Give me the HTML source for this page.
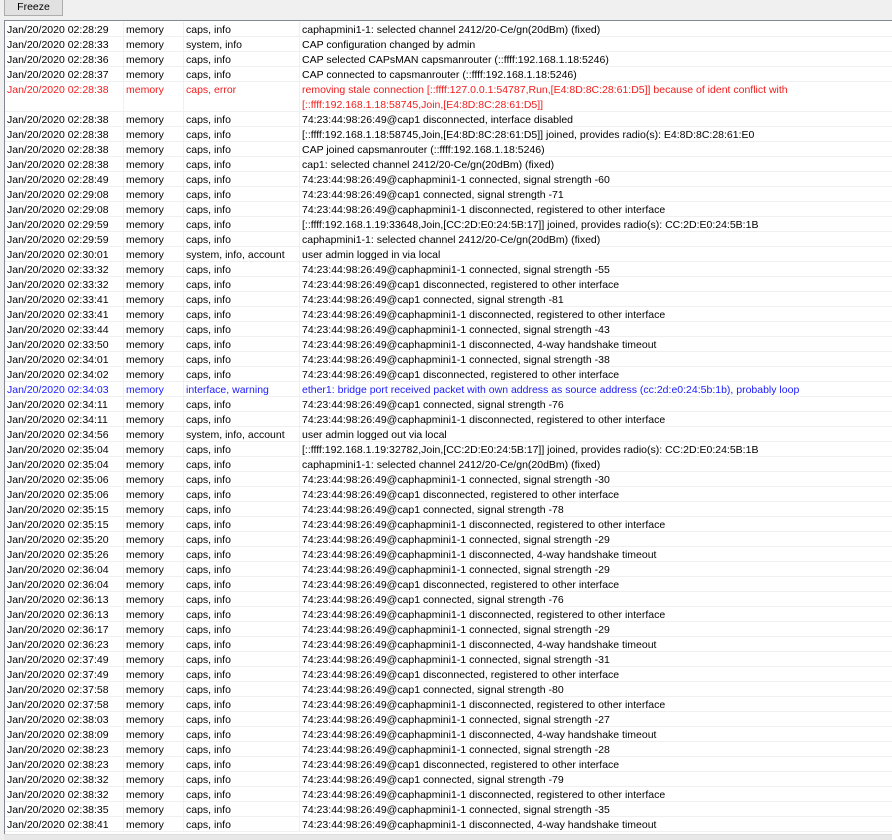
<!DOCTYPE html>
<html><head><meta charset="utf-8"><style>
*{margin:0;padding:0;box-sizing:border-box}
body{width:892px;height:840px;background:#f0f0f0;font-family:"Liberation Sans",Arial,sans-serif;font-size:10.5px;color:#000;overflow:hidden;position:relative}
.btn{position:absolute;left:4px;top:-2px;width:59px;height:18px;border:1px solid #adadad;background:#e1e1e1;text-align:center;line-height:17px;font-size:10.5px}
.tbl{position:absolute;left:4px;top:20px;width:888px;height:816px;background:#fff;border-left:1px solid #828790;border-top:1px solid #828790;padding-top:1px}
.r{position:relative;height:15px;border-bottom:1px solid #f0f0f0;white-space:nowrap}
.r div{position:absolute;top:0;height:100%;line-height:16px;border-right:1px solid #f0f0f0}
.a{left:0;width:119px;padding-left:2px}
.b{left:119px;width:60px;padding-left:2px}
.c{left:179px;width:116px;padding-left:2px}
.d{left:295px;width:593px;padding-left:2px;border-right:none!important}
.e{color:#f01c1c;height:30px}
.e div{line-height:15px;padding-top:1px}
.w{color:#1a1aff}
.sb{position:absolute;left:4px;top:834px;width:888px;height:6px;background:#e8e8e8;border-top:1px solid #ddd}
</style></head><body>
<div class="btn">Freeze</div>
<div class="tbl">
<div class="r"><div class="a">Jan/20/2020 02:28:29</div><div class="b">memory</div><div class="c">caps, info</div><div class="d">caphapmini1-1: selected channel 2412/20-Ce/gn(20dBm) (fixed)</div></div>
<div class="r"><div class="a">Jan/20/2020 02:28:33</div><div class="b">memory</div><div class="c">system, info</div><div class="d">CAP configuration changed by admin</div></div>
<div class="r"><div class="a">Jan/20/2020 02:28:36</div><div class="b">memory</div><div class="c">caps, info</div><div class="d">CAP selected CAPsMAN capsmanrouter (::ffff:192.168.1.18:5246)</div></div>
<div class="r"><div class="a">Jan/20/2020 02:28:37</div><div class="b">memory</div><div class="c">caps, info</div><div class="d">CAP connected to capsmanrouter (::ffff:192.168.1.18:5246)</div></div>
<div class="r e"><div class="a">Jan/20/2020 02:28:38</div><div class="b">memory</div><div class="c">caps, error</div><div class="d">removing stale connection [::ffff:127.0.0.1:54787,Run,[E4:8D:8C:28:61:D5]] because of ident conflict with<br>[::ffff:192.168.1.18:58745,Join,[E4:8D:8C:28:61:D5]]</div></div>
<div class="r"><div class="a">Jan/20/2020 02:28:38</div><div class="b">memory</div><div class="c">caps, info</div><div class="d">74:23:44:98:26:49@cap1 disconnected, interface disabled</div></div>
<div class="r"><div class="a">Jan/20/2020 02:28:38</div><div class="b">memory</div><div class="c">caps, info</div><div class="d">[::ffff:192.168.1.18:58745,Join,[E4:8D:8C:28:61:D5]] joined, provides radio(s): E4:8D:8C:28:61:E0</div></div>
<div class="r"><div class="a">Jan/20/2020 02:28:38</div><div class="b">memory</div><div class="c">caps, info</div><div class="d">CAP joined capsmanrouter (::ffff:192.168.1.18:5246)</div></div>
<div class="r"><div class="a">Jan/20/2020 02:28:38</div><div class="b">memory</div><div class="c">caps, info</div><div class="d">cap1: selected channel 2412/20-Ce/gn(20dBm) (fixed)</div></div>
<div class="r"><div class="a">Jan/20/2020 02:28:49</div><div class="b">memory</div><div class="c">caps, info</div><div class="d">74:23:44:98:26:49@caphapmini1-1 connected, signal strength -60</div></div>
<div class="r"><div class="a">Jan/20/2020 02:29:08</div><div class="b">memory</div><div class="c">caps, info</div><div class="d">74:23:44:98:26:49@cap1 connected, signal strength -71</div></div>
<div class="r"><div class="a">Jan/20/2020 02:29:08</div><div class="b">memory</div><div class="c">caps, info</div><div class="d">74:23:44:98:26:49@caphapmini1-1 disconnected, registered to other interface</div></div>
<div class="r"><div class="a">Jan/20/2020 02:29:59</div><div class="b">memory</div><div class="c">caps, info</div><div class="d">[::ffff:192.168.1.19:33648,Join,[CC:2D:E0:24:5B:17]] joined, provides radio(s): CC:2D:E0:24:5B:1B</div></div>
<div class="r"><div class="a">Jan/20/2020 02:29:59</div><div class="b">memory</div><div class="c">caps, info</div><div class="d">caphapmini1-1: selected channel 2412/20-Ce/gn(20dBm) (fixed)</div></div>
<div class="r"><div class="a">Jan/20/2020 02:30:01</div><div class="b">memory</div><div class="c">system, info, account</div><div class="d">user admin logged in via local</div></div>
<div class="r"><div class="a">Jan/20/2020 02:33:32</div><div class="b">memory</div><div class="c">caps, info</div><div class="d">74:23:44:98:26:49@caphapmini1-1 connected, signal strength -55</div></div>
<div class="r"><div class="a">Jan/20/2020 02:33:32</div><div class="b">memory</div><div class="c">caps, info</div><div class="d">74:23:44:98:26:49@cap1 disconnected, registered to other interface</div></div>
<div class="r"><div class="a">Jan/20/2020 02:33:41</div><div class="b">memory</div><div class="c">caps, info</div><div class="d">74:23:44:98:26:49@cap1 connected, signal strength -81</div></div>
<div class="r"><div class="a">Jan/20/2020 02:33:41</div><div class="b">memory</div><div class="c">caps, info</div><div class="d">74:23:44:98:26:49@caphapmini1-1 disconnected, registered to other interface</div></div>
<div class="r"><div class="a">Jan/20/2020 02:33:44</div><div class="b">memory</div><div class="c">caps, info</div><div class="d">74:23:44:98:26:49@caphapmini1-1 connected, signal strength -43</div></div>
<div class="r"><div class="a">Jan/20/2020 02:33:50</div><div class="b">memory</div><div class="c">caps, info</div><div class="d">74:23:44:98:26:49@caphapmini1-1 disconnected, 4-way handshake timeout</div></div>
<div class="r"><div class="a">Jan/20/2020 02:34:01</div><div class="b">memory</div><div class="c">caps, info</div><div class="d">74:23:44:98:26:49@caphapmini1-1 connected, signal strength -38</div></div>
<div class="r"><div class="a">Jan/20/2020 02:34:02</div><div class="b">memory</div><div class="c">caps, info</div><div class="d">74:23:44:98:26:49@cap1 disconnected, registered to other interface</div></div>
<div class="r w"><div class="a">Jan/20/2020 02:34:03</div><div class="b">memory</div><div class="c">interface, warning</div><div class="d">ether1: bridge port received packet with own address as source address (cc:2d:e0:24:5b:1b), probably loop</div></div>
<div class="r"><div class="a">Jan/20/2020 02:34:11</div><div class="b">memory</div><div class="c">caps, info</div><div class="d">74:23:44:98:26:49@cap1 connected, signal strength -76</div></div>
<div class="r"><div class="a">Jan/20/2020 02:34:11</div><div class="b">memory</div><div class="c">caps, info</div><div class="d">74:23:44:98:26:49@caphapmini1-1 disconnected, registered to other interface</div></div>
<div class="r"><div class="a">Jan/20/2020 02:34:56</div><div class="b">memory</div><div class="c">system, info, account</div><div class="d">user admin logged out via local</div></div>
<div class="r"><div class="a">Jan/20/2020 02:35:04</div><div class="b">memory</div><div class="c">caps, info</div><div class="d">[::ffff:192.168.1.19:32782,Join,[CC:2D:E0:24:5B:17]] joined, provides radio(s): CC:2D:E0:24:5B:1B</div></div>
<div class="r"><div class="a">Jan/20/2020 02:35:04</div><div class="b">memory</div><div class="c">caps, info</div><div class="d">caphapmini1-1: selected channel 2412/20-Ce/gn(20dBm) (fixed)</div></div>
<div class="r"><div class="a">Jan/20/2020 02:35:06</div><div class="b">memory</div><div class="c">caps, info</div><div class="d">74:23:44:98:26:49@caphapmini1-1 connected, signal strength -30</div></div>
<div class="r"><div class="a">Jan/20/2020 02:35:06</div><div class="b">memory</div><div class="c">caps, info</div><div class="d">74:23:44:98:26:49@cap1 disconnected, registered to other interface</div></div>
<div class="r"><div class="a">Jan/20/2020 02:35:15</div><div class="b">memory</div><div class="c">caps, info</div><div class="d">74:23:44:98:26:49@cap1 connected, signal strength -78</div></div>
<div class="r"><div class="a">Jan/20/2020 02:35:15</div><div class="b">memory</div><div class="c">caps, info</div><div class="d">74:23:44:98:26:49@caphapmini1-1 disconnected, registered to other interface</div></div>
<div class="r"><div class="a">Jan/20/2020 02:35:20</div><div class="b">memory</div><div class="c">caps, info</div><div class="d">74:23:44:98:26:49@caphapmini1-1 connected, signal strength -29</div></div>
<div class="r"><div class="a">Jan/20/2020 02:35:26</div><div class="b">memory</div><div class="c">caps, info</div><div class="d">74:23:44:98:26:49@caphapmini1-1 disconnected, 4-way handshake timeout</div></div>
<div class="r"><div class="a">Jan/20/2020 02:36:04</div><div class="b">memory</div><div class="c">caps, info</div><div class="d">74:23:44:98:26:49@caphapmini1-1 connected, signal strength -29</div></div>
<div class="r"><div class="a">Jan/20/2020 02:36:04</div><div class="b">memory</div><div class="c">caps, info</div><div class="d">74:23:44:98:26:49@cap1 disconnected, registered to other interface</div></div>
<div class="r"><div class="a">Jan/20/2020 02:36:13</div><div class="b">memory</div><div class="c">caps, info</div><div class="d">74:23:44:98:26:49@cap1 connected, signal strength -76</div></div>
<div class="r"><div class="a">Jan/20/2020 02:36:13</div><div class="b">memory</div><div class="c">caps, info</div><div class="d">74:23:44:98:26:49@caphapmini1-1 disconnected, registered to other interface</div></div>
<div class="r"><div class="a">Jan/20/2020 02:36:17</div><div class="b">memory</div><div class="c">caps, info</div><div class="d">74:23:44:98:26:49@caphapmini1-1 connected, signal strength -29</div></div>
<div class="r"><div class="a">Jan/20/2020 02:36:23</div><div class="b">memory</div><div class="c">caps, info</div><div class="d">74:23:44:98:26:49@caphapmini1-1 disconnected, 4-way handshake timeout</div></div>
<div class="r"><div class="a">Jan/20/2020 02:37:49</div><div class="b">memory</div><div class="c">caps, info</div><div class="d">74:23:44:98:26:49@caphapmini1-1 connected, signal strength -31</div></div>
<div class="r"><div class="a">Jan/20/2020 02:37:49</div><div class="b">memory</div><div class="c">caps, info</div><div class="d">74:23:44:98:26:49@cap1 disconnected, registered to other interface</div></div>
<div class="r"><div class="a">Jan/20/2020 02:37:58</div><div class="b">memory</div><div class="c">caps, info</div><div class="d">74:23:44:98:26:49@cap1 connected, signal strength -80</div></div>
<div class="r"><div class="a">Jan/20/2020 02:37:58</div><div class="b">memory</div><div class="c">caps, info</div><div class="d">74:23:44:98:26:49@caphapmini1-1 disconnected, registered to other interface</div></div>
<div class="r"><div class="a">Jan/20/2020 02:38:03</div><div class="b">memory</div><div class="c">caps, info</div><div class="d">74:23:44:98:26:49@caphapmini1-1 connected, signal strength -27</div></div>
<div class="r"><div class="a">Jan/20/2020 02:38:09</div><div class="b">memory</div><div class="c">caps, info</div><div class="d">74:23:44:98:26:49@caphapmini1-1 disconnected, 4-way handshake timeout</div></div>
<div class="r"><div class="a">Jan/20/2020 02:38:23</div><div class="b">memory</div><div class="c">caps, info</div><div class="d">74:23:44:98:26:49@caphapmini1-1 connected, signal strength -28</div></div>
<div class="r"><div class="a">Jan/20/2020 02:38:23</div><div class="b">memory</div><div class="c">caps, info</div><div class="d">74:23:44:98:26:49@cap1 disconnected, registered to other interface</div></div>
<div class="r"><div class="a">Jan/20/2020 02:38:32</div><div class="b">memory</div><div class="c">caps, info</div><div class="d">74:23:44:98:26:49@cap1 connected, signal strength -79</div></div>
<div class="r"><div class="a">Jan/20/2020 02:38:32</div><div class="b">memory</div><div class="c">caps, info</div><div class="d">74:23:44:98:26:49@caphapmini1-1 disconnected, registered to other interface</div></div>
<div class="r"><div class="a">Jan/20/2020 02:38:35</div><div class="b">memory</div><div class="c">caps, info</div><div class="d">74:23:44:98:26:49@caphapmini1-1 connected, signal strength -35</div></div>
<div class="r"><div class="a">Jan/20/2020 02:38:41</div><div class="b">memory</div><div class="c">caps, info</div><div class="d">74:23:44:98:26:49@caphapmini1-1 disconnected, 4-way handshake timeout</div></div>
</div>
<div class="sb"></div>
</body></html>
